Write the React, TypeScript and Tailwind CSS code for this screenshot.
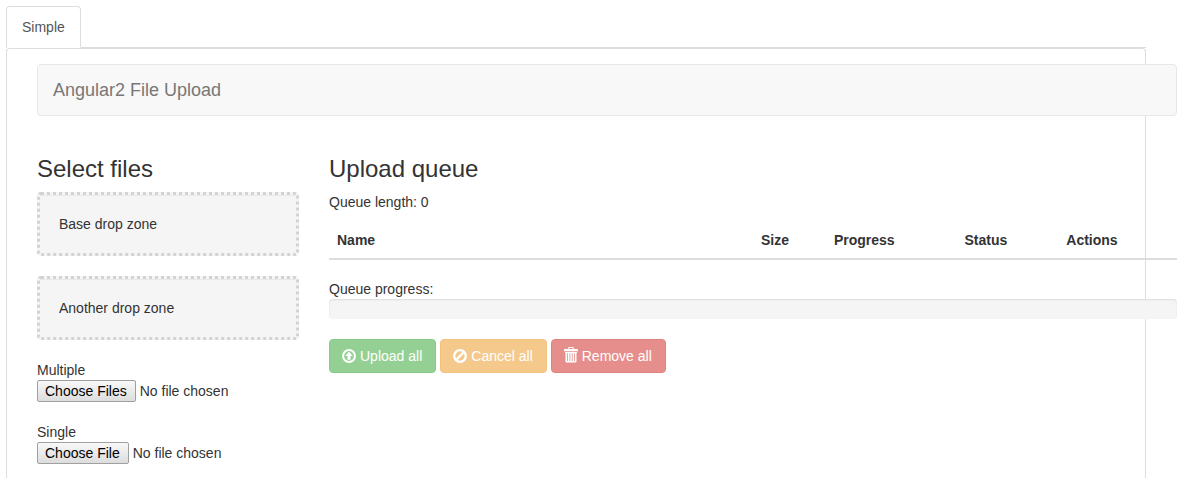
import React from "react";

const COLUMNS = [
  { name: "Name", width: "w-1/2" },
  { name: "Size", width: "w-[8.6%]" },
  { name: "Progress", width: "w-[15.4%]" },
  { name: "Status", width: "w-[12%]" },
  { name: "Actions", width: "w-[14%]" },
];

function UploadIcon() {
  return (
    <svg className="size-3.5" viewBox="0 0 14 14" aria-hidden="true">
      <circle cx="7" cy="7" r="5.9" fill="none" stroke="currentColor" strokeWidth="2" />
      <path d="M7 2.8 10.8 7H8.5v3.8H5.5V7H3.2Z" fill="currentColor" />
    </svg>
  );
}

function BanIcon() {
  return (
    <svg className="size-3.5" viewBox="0 0 14 14" aria-hidden="true">
      <circle cx="7" cy="7" r="5.8" fill="none" stroke="currentColor" strokeWidth="2.3" />
      <path d="M3.4 10.6 10.6 3.4" stroke="currentColor" strokeWidth="2.2" />
    </svg>
  );
}

function TrashIcon() {
  return (
    <svg className="-mt-0.5 h-4 w-3.5" viewBox="0 0 14 16" aria-hidden="true">
      <path
        fill="currentColor"
        fillRule="evenodd"
        d="M5.2 0h3.6a1 1 0 0 1 1 1v1H13a1 1 0 0 1 1 1v1.2H0V3a1 1 0 0 1 1-1h3.2V1a1 1 0 0 1 1-1Zm0 1v1h3.6V1ZM1 5h12v1h-.5v8.5a1 1 0 0 1-1 1h-9a1 1 0 0 1-1-1V6H1Zm2.2 1.3v7.6h.8V6.3Zm2.3 0v7.6h.8V6.3Zm2.3 0v7.6h.8V6.3Zm2.3 0v7.6h.8V6.3Z"
      />
    </svg>
  );
}

function DropZone({ children }: { children: React.ReactNode }) {
  return (
    <div className="mb-5 rounded border-3 border-dotted border-[#d3d3d3] bg-[#f5f5f5] p-[19px] shadow-[inset_0_1px_1px_rgba(0,0,0,0.05)]">
      {children}
    </div>
  );
}

function FileField({ id, label, multiple }: { id: string; label: string; multiple?: boolean }) {
  return (
    <div>
      <label htmlFor={id} className="block">
        {label}
      </label>
      <input
        id={id}
        type="file"
        multiple={multiple}
        className="block h-[22px] w-full file:h-[22px] file:rounded-xs file:border file:border-solid file:border-[#a0a0a0] file:bg-linear-to-b file:from-[#f8f8f8] file:to-[#dddddd] file:pr-2 file:pl-[7px] file:text-black"
      />
    </div>
  );
}

export default function App() {
  const button =
    "flex h-[34px] items-center gap-1 rounded border pr-[13px] pl-3 text-white opacity-65";
  return (
    <div className="min-h-screen overflow-x-hidden bg-white pt-1.5 pr-[37px] pb-5 pl-1.5 font-['Liberation_Sans',Arial,sans-serif] text-sm leading-5 text-[#333]">
      <nav className="flex border-b border-[#ddd]">
        <a
          href="#simple"
          className="-mb-px rounded-t border border-b-white border-[#ddd] bg-white px-[15px] py-2.5 text-[#555]"
        >
          Simple
        </a>
      </nav>
      <main id="simple" className="rounded-t border border-b-0 border-[#ddd] pt-[15px] pb-3.5 pl-[30px]">
        <div className="-mr-8">
          <header className="mb-5 rounded border border-[#e7e7e7] bg-[#f8f8f8] p-[15px] text-lg leading-5 text-[#777]">
            Angular2 File Upload
          </header>
          <div className="flex gap-[30px] pt-5">
            <section className="w-[262px] shrink-0">
              <h3 className="mb-2.5 text-2xl leading-[26px]">Select files</h3>
              <DropZone>Base drop zone</DropZone>
              <DropZone>Another drop zone</DropZone>
              <div className="flex flex-col gap-5">
                <FileField id="multiple" label="Multiple" multiple />
                <FileField id="single" label="Single" />
              </div>
            </section>
            <section className="min-w-0 flex-1">
              <h3 className="mb-2.5 text-2xl leading-[26px]">Upload queue</h3>
              <p className="mb-2.5">Queue length: 0</p>
              <table className="mb-[19px] w-full table-fixed border-collapse text-left">
                <thead>
                  <tr>
                    {COLUMNS.map(({ name, width }) => (
                      <th key={name} className={`${width} border-b-2 border-[#ddd] p-2`}>
                        {name}
                      </th>
                    ))}
                  </tr>
                </thead>
              </table>
              <div>Queue progress:</div>
              <div
                role="progressbar"
                aria-label="Queue progress"
                aria-valuenow={0}
                className="mb-5 h-5 rounded bg-[#f5f5f5] shadow-[inset_0_1px_2px_rgba(0,0,0,0.1)]"
              />
              <div className="flex gap-1">
                <button type="button" disabled className={`${button} border-[#4cae4c] bg-[#5cb85c]`}>
                  <UploadIcon />
                  Upload all
                </button>
                <button type="button" disabled className={`${button} border-[#eea236] bg-[#f0ad4e]`}>
                  <BanIcon />
                  Cancel all
                </button>
                <button type="button" disabled className={`${button} border-[#d43f3a] bg-[#d9534f]`}>
                  <TrashIcon />
                  Remove all
                </button>
              </div>
            </section>
          </div>
        </div>
      </main>
    </div>
  );
}
